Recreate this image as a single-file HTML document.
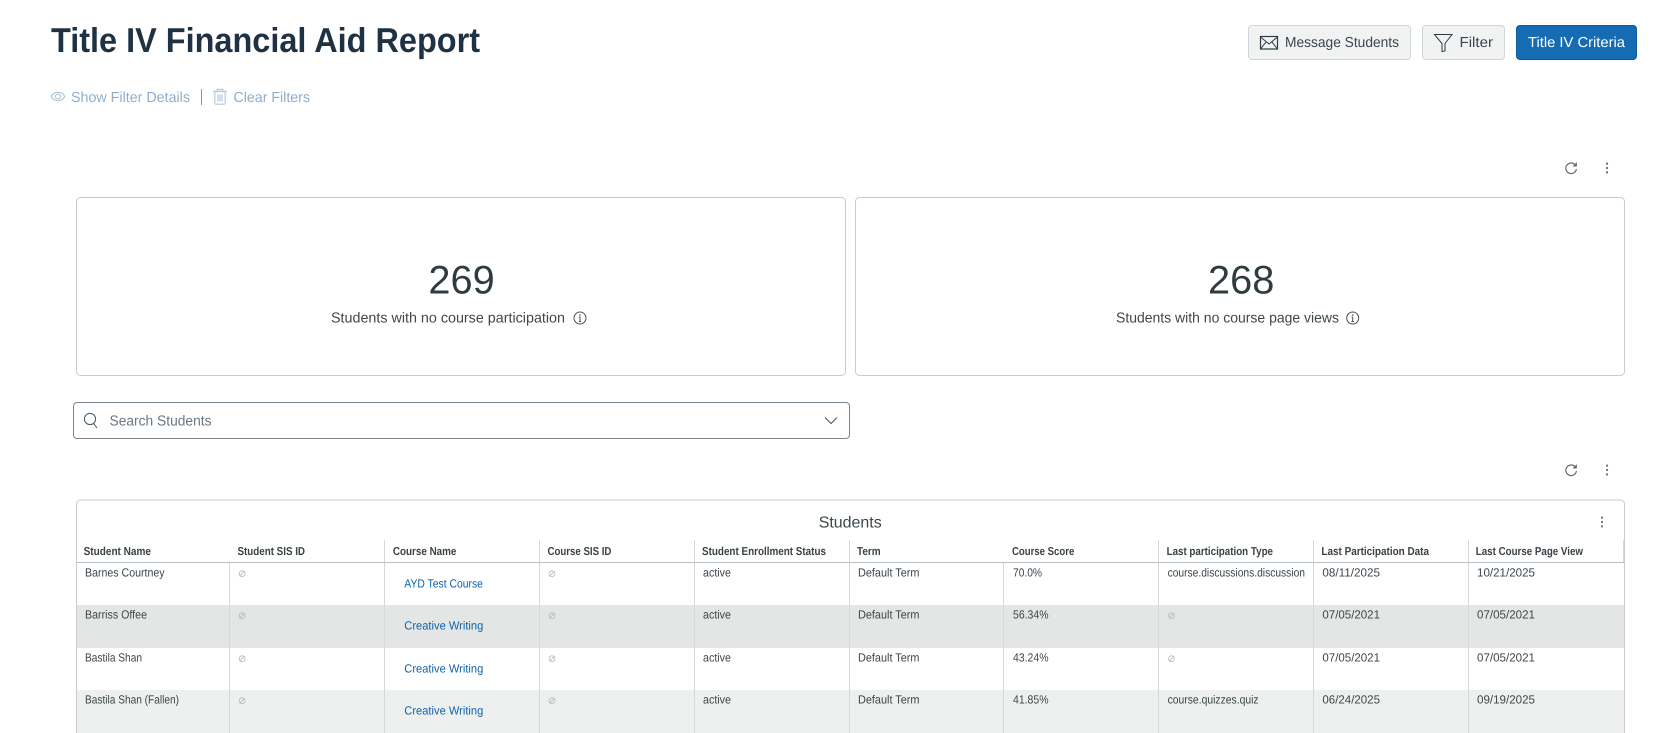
<!DOCTYPE html>
<html lang="en">
<head>
<meta charset="utf-8">
<title>Title IV Financial Aid Report</title>
<style>
html,body{margin:0;padding:0;background:#fff;width:1657px;height:733px;overflow:hidden}
svg{display:block;font-family:"Liberation Sans",sans-serif}
text{text-rendering:geometricPrecision}
.h{font-size:11.5px;font-weight:700;fill:#3a4246}
.c{font-size:11.8px;fill:#3d4548}
.l{font-size:11.8px;fill:#0e62ad}
.f{font-size:14.5px;fill:#90aecb}
.b{font-size:14.5px;fill:#3a454d}
.m{font-size:14.5px;fill:#3f484c}
.n{font-size:40px;fill:#2f3b3f}
.sep{stroke:#d6d9db;stroke-width:1}
.nul{fill:none;stroke:#b3b7ba;stroke-width:.8}
</style>
</head>
<body>
<svg width="1657" height="733" viewBox="0 0 1657 733" xmlns="http://www.w3.org/2000/svg">
<defs>
<g id="nul" class="nul"><circle cx="3.5" cy="0" r="2.9"/><path d="M1.1 2.6L5.9-2.6"/></g>
<g id="dots" fill="#666c70"><circle cx="0" cy="-4.4" r="1.1"/><circle cx="0" cy="0" r="1.1"/><circle cx="0" cy="4.4" r="1.1"/></g>
<g id="ref" fill="none" stroke="#666c70" stroke-width="1.2"><path d="M4.4-2.9A5.3 5.3 0 1 0 5.4 1"/><path d="M5.4-5.4V-2H2" fill="#666c70" stroke-width="1"/></g>
</defs>

<!-- Page heading -->
<text x="51" y="52" font-size="34.5" font-weight="700" fill="#1f3244" textLength="429" lengthAdjust="spacingAndGlyphs">Title IV Financial Aid Report</text>

<!-- Filter links -->
<g fill="none" stroke="#a3bdd4" stroke-width="1">
<path d="M51.2 96.5C54.5 90.9 61.5 90.9 64.8 96.5C61.5 102.1 54.5 102.1 51.2 96.5Z"/>
<circle cx="58" cy="96.5" r="2.5"/>
</g>
<text class="f" x="71" y="102" textLength="119" lengthAdjust="spacingAndGlyphs">Show Filter Details</text>
<path d="M201.5 89V105" stroke="#8994a0" stroke-width="1"/>
<g fill="none" stroke="#b5c9dc" stroke-width="1.2">
<path d="M213 91.5H227M217.2 91.5V89.5H222.8V91.5M214.8 91.5V103Q214.8 104.2 216 104.2H224Q225.2 104.2 225.2 103V91.5M218 94.5V101.5M220 94.5V101.5M222 94.5V101.5"/>
</g>
<text class="f" x="233.5" y="102" textLength="76.5" lengthAdjust="spacingAndGlyphs">Clear Filters</text>

<!-- Header buttons -->
<rect x="1248.5" y="25.5" width="162" height="34" rx="3.5" fill="#f1f3f3" stroke="#d0d5d9"/>
<g fill="none" stroke="#2d3b45" stroke-width="1.2">
<rect x="1260.5" y="36.5" width="17" height="12.5"/>
<path d="M1260.5 37L1269 44L1277.5 37M1260.5 49L1266.2 41.8M1277.5 49L1271.8 41.8" stroke-width="1"/>
</g>
<text class="b" x="1285" y="47" textLength="114" lengthAdjust="spacingAndGlyphs">Message Students</text>

<rect x="1422.5" y="25.5" width="82" height="34" rx="3.5" fill="#f1f3f3" stroke="#d0d5d9"/>
<path d="M1434.5 34.5H1452L1445 43.5V51L1442 51.5V43.5Z" fill="none" stroke="#2d3b45" stroke-width="1"/>
<text class="b" x="1459.5" y="47" textLength="33.5" lengthAdjust="spacingAndGlyphs">Filter</text>

<rect x="1516.5" y="25.5" width="120" height="34" rx="3.5" fill="#166cb3" stroke="#0f5a98"/>
<text x="1528" y="47" font-size="14.5" fill="#fff" textLength="97" lengthAdjust="spacingAndGlyphs">Title IV Criteria</text>

<!-- Toolbar 1 -->
<use href="#ref" x="1571" y="168"/>
<use href="#dots" x="1607" y="168"/>

<!-- Metric cards -->
<rect x="76.5" y="197.5" width="769" height="178" rx="4" fill="#fff" stroke="#c9cccf"/>
<text class="n" x="428.4" y="293.3" textLength="66.3" lengthAdjust="spacingAndGlyphs">269</text>
<text class="m" x="331" y="322.7" textLength="234" lengthAdjust="spacingAndGlyphs">Students with no course participation</text>
<g fill="none" stroke="#4a5256" stroke-width="1">
<circle cx="580" cy="318" r="6"/><path d="M580 317V321.5M578.8 321.5H581.2M578.9 317H580"/>
</g>
<circle cx="580" cy="315" r=".8" fill="#4a5256"/>

<rect x="855.5" y="197.5" width="769" height="178" rx="4" fill="#fff" stroke="#c9cccf"/>
<text class="n" x="1208" y="293.3" textLength="66.3" lengthAdjust="spacingAndGlyphs">268</text>
<text class="m" x="1116" y="322.7" textLength="223" lengthAdjust="spacingAndGlyphs">Students with no course page views</text>
<g fill="none" stroke="#4a5256" stroke-width="1">
<circle cx="1352.7" cy="318" r="6"/><path d="M1352.7 317V321.5M1351.5 321.5H1353.9M1351.6 317H1352.7"/>
</g>
<circle cx="1352.7" cy="315" r=".8" fill="#4a5256"/>

<!-- Search -->
<rect x="73.5" y="402.5" width="776" height="36" rx="3.5" fill="#fff" stroke="#7a858d"/>
<g fill="none" stroke="#4a555d" stroke-width="1">
<circle cx="90" cy="419" r="5.6"/><path d="M93.6 423.4L97 428"/>
</g>
<text x="109.5" y="425.5" font-size="14.5" fill="#6b7780" textLength="102" lengthAdjust="spacingAndGlyphs">Search Students</text>
<path d="M825 417.5L831 423.5L837 417.5" fill="none" stroke="#4a555d" stroke-width="1"/>

<!-- Toolbar 2 -->
<use href="#ref" x="1571" y="470"/>
<use href="#dots" x="1607" y="470"/>

<!-- Table card -->
<path d="M76.5 733V504a4 4 0 0 1 4-4H1620.5a4 4 0 0 1 4 4V733" fill="#fff" stroke="#c9cccf"/>
<text x="818.7" y="527.7" font-size="16" fill="#3f484c" textLength="63" lengthAdjust="spacingAndGlyphs">Students</text>
<use href="#dots" x="1602" y="522"/>

<!-- Row stripes -->
<rect x="77" y="605" width="1547" height="43" fill="#e4e6e6"/>
<rect x="77" y="690" width="1547" height="43" fill="#eef0f0"/>

<!-- Header separators -->
<g class="sep">
<path d="M384.5 540V562M539.5 540V562M694.5 540V562M849.5 540V562M1158.5 540V562M1313.5 540V562M1468.5 540V562"/>
<path d="M1623.5 540V562"/>
</g>
<!-- Body separators -->
<g class="sep">
<path d="M229.5 562V733M384.5 562V733M539.5 562V733M694.5 562V733M849.5 562V733M1003.5 562V733M1158.5 562V733M1313.5 562V733M1468.5 562V733"/>
</g>
<path d="M77 562.5H1624" stroke="#bac0c6" stroke-width="1"/>

<!-- Headers -->
<text class="h" x="83.6" y="555" textLength="67.4" lengthAdjust="spacingAndGlyphs">Student Name</text>
<text class="h" x="237.5" y="555" textLength="67.5" lengthAdjust="spacingAndGlyphs">Student SIS ID</text>
<text class="h" x="392.9" y="555" textLength="63.5" lengthAdjust="spacingAndGlyphs">Course Name</text>
<text class="h" x="547.5" y="555" textLength="63.9" lengthAdjust="spacingAndGlyphs">Course SIS ID</text>
<text class="h" x="702" y="555" textLength="124" lengthAdjust="spacingAndGlyphs">Student Enrollment Status</text>
<text class="h" x="857" y="555" textLength="23.6" lengthAdjust="spacingAndGlyphs">Term</text>
<text class="h" x="1012" y="555" textLength="62.3" lengthAdjust="spacingAndGlyphs">Course Score</text>
<text class="h" x="1166.6" y="555" textLength="106.4" lengthAdjust="spacingAndGlyphs">Last participation Type</text>
<text class="h" x="1321.4" y="555" textLength="107.6" lengthAdjust="spacingAndGlyphs">Last Participation Data</text>
<text class="h" x="1475.8" y="555" textLength="107.2" lengthAdjust="spacingAndGlyphs">Last Course Page View</text>

<!-- Row 1 -->
<text class="c" x="85" y="576.7" textLength="79.6" lengthAdjust="spacingAndGlyphs">Barnes Courtney</text>
<use href="#nul" x="238.6" y="573.7"/>
<text class="l" x="404.3" y="587.7" textLength="78.6" lengthAdjust="spacingAndGlyphs">AYD Test Course</text>
<use href="#nul" x="548.5" y="573.7"/>
<text class="c" x="703" y="576.7" textLength="28" lengthAdjust="spacingAndGlyphs">active</text>
<text class="c" x="858" y="576.7" textLength="61.5" lengthAdjust="spacingAndGlyphs">Default Term</text>
<text class="c" x="1013" y="576.7" textLength="29" lengthAdjust="spacingAndGlyphs">70.0%</text>
<text class="c" x="1167.6" y="576.7" textLength="137.4" lengthAdjust="spacingAndGlyphs">course.discussions.discussion</text>
<text class="c" x="1322.4" y="576.7" textLength="57.6" lengthAdjust="spacingAndGlyphs">08/11/2025</text>
<text class="c" x="1477" y="576.7" textLength="58" lengthAdjust="spacingAndGlyphs">10/21/2025</text>

<!-- Row 2 -->
<text class="c" x="85" y="618.7" textLength="62" lengthAdjust="spacingAndGlyphs">Barriss Offee</text>
<use href="#nul" x="238.6" y="615.7"/>
<text class="l" x="404.3" y="629.7" textLength="79" lengthAdjust="spacingAndGlyphs">Creative Writing</text>
<use href="#nul" x="548.5" y="615.7"/>
<text class="c" x="703" y="618.7" textLength="28" lengthAdjust="spacingAndGlyphs">active</text>
<text class="c" x="858" y="618.7" textLength="61.5" lengthAdjust="spacingAndGlyphs">Default Term</text>
<text class="c" x="1013" y="618.7" textLength="35.5" lengthAdjust="spacingAndGlyphs">56.34%</text>
<use href="#nul" x="1168" y="615.7"/>
<text class="c" x="1322.4" y="618.7" textLength="57.6" lengthAdjust="spacingAndGlyphs">07/05/2021</text>
<text class="c" x="1477" y="618.7" textLength="58" lengthAdjust="spacingAndGlyphs">07/05/2021</text>

<!-- Row 3 -->
<text class="c" x="85" y="661.7" textLength="57" lengthAdjust="spacingAndGlyphs">Bastila Shan</text>
<use href="#nul" x="238.6" y="658.7"/>
<text class="l" x="404.3" y="672.7" textLength="79" lengthAdjust="spacingAndGlyphs">Creative Writing</text>
<use href="#nul" x="548.5" y="658.7"/>
<text class="c" x="703" y="661.7" textLength="28" lengthAdjust="spacingAndGlyphs">active</text>
<text class="c" x="858" y="661.7" textLength="61.5" lengthAdjust="spacingAndGlyphs">Default Term</text>
<text class="c" x="1013" y="661.7" textLength="35.5" lengthAdjust="spacingAndGlyphs">43.24%</text>
<use href="#nul" x="1168" y="658.7"/>
<text class="c" x="1322.4" y="661.7" textLength="57.6" lengthAdjust="spacingAndGlyphs">07/05/2021</text>
<text class="c" x="1477" y="661.7" textLength="58" lengthAdjust="spacingAndGlyphs">07/05/2021</text>

<!-- Row 4 -->
<text class="c" x="85" y="703.7" textLength="94" lengthAdjust="spacingAndGlyphs">Bastila Shan (Fallen)</text>
<use href="#nul" x="238.6" y="700.7"/>
<text class="l" x="404.3" y="714.7" textLength="79" lengthAdjust="spacingAndGlyphs">Creative Writing</text>
<use href="#nul" x="548.5" y="700.7"/>
<text class="c" x="703" y="703.7" textLength="28" lengthAdjust="spacingAndGlyphs">active</text>
<text class="c" x="858" y="703.7" textLength="61.5" lengthAdjust="spacingAndGlyphs">Default Term</text>
<text class="c" x="1013" y="703.7" textLength="35.5" lengthAdjust="spacingAndGlyphs">41.85%</text>
<text class="c" x="1167.6" y="703.7" textLength="91" lengthAdjust="spacingAndGlyphs">course.quizzes.quiz</text>
<text class="c" x="1322.4" y="703.7" textLength="57.6" lengthAdjust="spacingAndGlyphs">06/24/2025</text>
<text class="c" x="1477" y="703.7" textLength="58" lengthAdjust="spacingAndGlyphs">09/19/2025</text>
</svg>
</body>
</html>
